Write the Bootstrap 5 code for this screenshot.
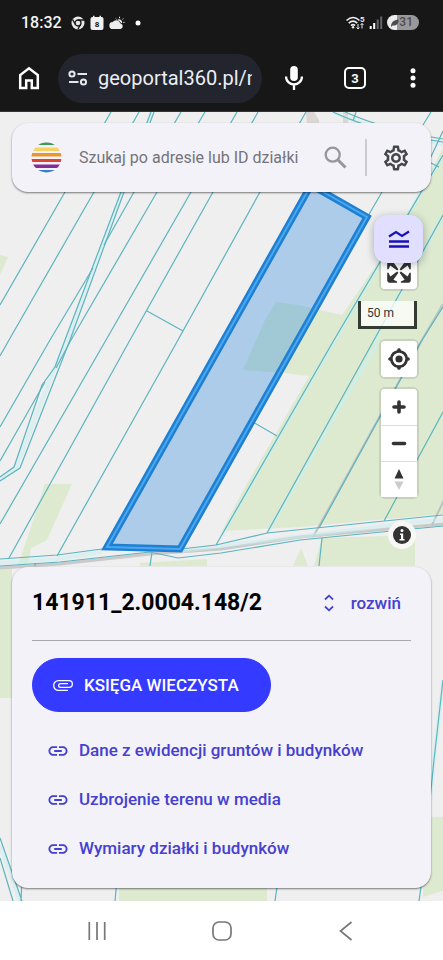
<!DOCTYPE html>
<html lang="pl">
<head>
<meta charset="utf-8">
<meta name="viewport" content="width=device-width, initial-scale=1">
<title>Geoportal 360</title>
<link href="https://cdn.jsdelivr.net/npm/bootstrap@5.3.0/dist/css/bootstrap.min.css" rel="stylesheet">
<style>
  body { font-family: Roboto, "Noto Sans", sans-serif; background: #fff; }
  svg { display: block; flex-shrink: 0; }
  button, .btn { line-height: 1; }
  .device-top { background: #171718; color: #f4f4f4; border-bottom: 1px solid #36343c; }
  .status-row { height: 45px; padding: 0 24px 0 21px; }
  .notices { gap: 5px; margin-left: 9px; }
  .clock { font-size: 16px; font-weight: 500; }
  .battery { width: 32px; height: 15px; border-radius: 8px; font-size: 12px; line-height: 15px; font-weight: 500; color: #4c4c50; background: linear-gradient(90deg, #ececec 31%, #98989b 31%); padding-right: 6px; }
  .browser-row { height: 66px; padding: 0 24px 0 18px; }
  .address { background: #22252d; border-radius: 25px; height: 49px; margin: 0 23px 0 18px; padding: 0 10px; min-width: 0; }
  .address input { background: none; border: 0; outline: 0; color: #eceef4; font-size: 20px; min-width: 0; width: 100%; padding: 0; margin-left: 10px; }
  .bare { background: none; border: 0; padding: 0; color: inherit; flex-shrink: 0; }
  .browser-tools { gap: 41px; }
  .tab-count { width: 22px; height: 22px; border: 2px solid #fff; border-radius: 5px; font-size: 13px; font-weight: 700; }
  .map-area { background: #efefef; isolation: isolate; overflow: hidden; }
  .map-canvas { z-index: -1; }
  .panel { background: #f3f2f8; border-radius: 16px; box-shadow: 0 1px 2px rgba(0,0,0,.5); margin: 0 12px; }
  .search-panel { height: 69px; margin-top: 11px; padding: 0 22px 0 19px; }
  .search-panel input { background: none; border: 0; outline: 0; font-size: 16px; min-width: 0; padding: 0; margin-left: 17px; color: #444; }
  .search-panel input::placeholder { color: #75747a; opacity: 1; }
  .divider { width: 2px; height: 37px; background: #cccbd1; margin: 0 16px 0 18px; }
  .controls { padding-right: 26px; margin-top: 23px; }
  .legend-btn { width: 49px; height: 48px; border-radius: 13px; background: #e0dfff; border: 0; margin-right: -6px; box-shadow: 0 2px 8px rgba(0,0,0,.3); z-index: 2; }
  .map-btn { width: 36px; height: 36px; border: 0; border-radius: 4px; background: #fff; padding: 0; color: #333; }
  .ctl-box { display: flex; flex-direction: column; background: #fff; border-radius: 4px; box-shadow: 0 0 0 2px rgba(0,0,0,.1); }
  .ctl-box .map-btn + .map-btn { border-top: 1px solid #ddd; border-radius: 0; }
  .fullscreen { margin-top: -10px; }
  .scale-bar { width: 59px; height: 28px; border: 3px solid #333b33; border-top: 0; background: rgba(255,255,255,.75); font-size: 12px; color: #333; line-height: 24px; padding-left: 6px; margin: 12px 0; }
  .zoom-box { margin-top: 12px; }
  .info-btn { width: 28px; height: 28px; border-radius: 50%; background: #f7f7f5; border: 0; padding: 0; margin: 24px 1px 16px; }
  .parcel { margin-bottom: 13px; padding: 20px 20px 15px; }
  .parcel h1 { font-size: 23px; line-height: 32px; font-weight: 700; color: #000; margin: 0; }
  .accent { color: #4540cf; font-weight: 500; }
  .expand { font-size: 17px; margin-right: 10px; gap: 12px; }
  .parcel hr { margin: 21px 0 17px; border-top: 1px solid #a9a8ae; opacity: 1; }
  .register { --bs-btn-bg: #343aff; --bs-btn-border-color: #343aff; --bs-btn-color: #fff; height: 54px; border-radius: 27px; font-size: 17px; font-weight: 500; padding: 0 31px 0 19px; gap: 10px; }
  .parcel-links { margin-top: 14px; }
  .parcel-links a { height: 49px; font-size: 17px; text-decoration: none; padding-left: 16px; gap: 11px; }
  .system-nav { height: 59px; background: #fff; color: #77777a; padding: 0 88px; }
</style>
</head>
<body>
<div class="d-flex flex-column min-vh-100">

  <header class="device-top">
    <div class="status-row d-flex align-items-center">
      <span class="clock">18:32</span>
      <span class="notices d-flex align-items-center">
        <svg width="14" height="14" viewBox="0 0 14 14"><circle cx="7" cy="7" r="6.500" fill="#e8e8e8"/><circle cx="7" cy="7" r="3" fill="#e8e8e8" stroke="#171718" stroke-width="1.300"/><path d="M7 4h6M4.400 8.500 1.600 3.600M9.600 8.500 6.800 13.300" stroke="#171718" stroke-width="1.300"/></svg>
        <svg width="14" height="16" viewBox="0 0 14 16"><path fill="#f1f1f1" d="M2.500 2H3V.8h1.500V2h5V.8H11V2h.5A2 2 0 0 1 13.500 4v9a2 2 0 0 1-2 2h-9a2 2 0 0 1-2-2V4a2 2 0 0 1 2-2z"/><text x="7" y="12" text-anchor="middle" font-size="8" font-weight="700" fill="#171718">8</text></svg>
        <svg width="16" height="14" viewBox="0 0 16 14"><path fill="#ededed" d="M4 13a3.500 3.500 0 0 1-.3-7A4.500 4.500 0 0 1 11.500 7.500 2.800 2.800 0 0 1 11.500 13z"/><path fill="#ededed" d="M8 4.300a3 3 0 0 1 5 3l-.8-.3A5 5 0 0 0 8 4.300z"/><path d="M10.500 2.200V.8M13.400 3.500l1-1M14.200 6.300h1.400M7.600 3.400l-.9-.9" stroke="#ededed"/></svg>
        <svg width="12" height="6" viewBox="0 0 12 6"><circle cx="8" cy="3" r="2.500" fill="#fff"/></svg>
      </span>
      <svg class="ms-auto" width="38" height="16" viewBox="0 0 38 16"><g fill="none" stroke="#ececec" stroke-width="1.600"><path d="M1.500 5.500q6.500-6 13 0M3.700 8.200q4.300-4 8.600 0M6 10.600q2-2 4 0"/></g><circle cx="8" cy="12.300" r="1.200" fill="#ececec"/><path d="M13 9v5M11.500 12.500 13 14l1.500-1.500M17 13.500V8.500M15.500 10 17 8.500l1.500 1.500" stroke="#ececec" fill="none"/><text x="15" y="7" font-size="8" font-weight="700" fill="#ececec">5</text><path d="M25.700 14v-3M29.200 14V8" stroke="#fff" stroke-width="2"/><path d="M32.700 14V4.500M36.200 14V1.500" stroke="#66666a" stroke-width="2"/></svg>
      <span class="battery ms-1 d-flex align-items-center justify-content-end"><svg width="8" height="8" viewBox="0 0 8 8"><path d="M0 8C0 3 3 1 7.500.5 8 5 5 7 1.500 6.500z" fill="#4c4c50"/></svg>31</span>
    </div>
    <div class="browser-row d-flex align-items-center">
      <button class="bare" aria-label="Strona główna"><svg width="22" height="24" viewBox="0 0 22 24"><path d="M2.200 22V9L11 2.300 19.800 9v13h-6v-7.500H8.200V22z" fill="none" stroke="#fff" stroke-width="2.500"/></svg></button>
      <div class="address d-flex align-items-center flex-grow-1">
        <svg width="20" height="16" viewBox="0 0 20 16"><g fill="none" stroke="#e4e6ec" stroke-width="2"><circle cx="4" cy="4" r="2.600"/><circle cx="15.500" cy="12" r="2.600"/><path d="M9.500 4H19M1 12h9.500"/></g></svg>
        <input type="text" aria-label="Adres strony" value="geoportal360.pl/mapa">
      </div>
      <div class="browser-tools d-flex align-items-center">
        <button class="bare" aria-label="Wyszukiwanie głosowe"><svg width="18" height="24" viewBox="0 0 18 24"><rect x="5.200" y="0" width="7.600" height="15" rx="3.800" fill="#fff"/><path d="M1 10.500a8 8 0 0 0 16 0M9 18.500V24" fill="none" stroke="#fff" stroke-width="2.300"/></svg></button>
        <button class="bare tab-count" aria-label="Karty">3</button>
        <button class="bare" aria-label="Menu"><svg width="12" height="20" viewBox="0 0 12 20" fill="#fff"><circle cx="6" cy="2.700" r="2.500"/><circle cx="6" cy="10" r="2.500"/><circle cx="6" cy="17.300" r="2.500"/></svg></button>
      </div>
    </div>
  </header>

  <main class="map-area position-relative flex-grow-1 d-flex flex-column">
    <svg class="map-canvas position-absolute top-0 start-0 w-100 h-100" viewBox="0 112 443 789" preserveAspectRatio="xMidYMid slice" aria-hidden="true">
      <g fill="#ddead0">
        <path d="M443 148 400 230 342 315 320 310 298 305 276 302 265 320 243 370 284 373 309 376 245 487 222 531 300 527 443 514z"/>
        <path d="M314 566l8-28 93-3v31zM301 548l7 18h-15zM45 484h27L47 540l-16 8-3 17-28 3v130h12V566h6zM0 255l8 2-8 18zM119 880h148v21H119zM443 817h-20v80l20-6zM140 563l67-4v7h-67z"/>
      </g>
      <path d="M306 112l8 0 5 8 0 6h-12zM343 112h5v12h-5z" fill="#dcd6d4"/>
      <path d="M0 568 60 564 150 554 221 549 300 537 443 524" fill="none" stroke="#cbcaca" stroke-width="3"/>
      <path d="M313 537 422 340 443 304M432 525l12-25" fill="none" stroke="#bcc2c3" stroke-width="2"/>
      <g fill="none" stroke="#c8f0f1" stroke-width="4" opacity=".5">
        <path d="M152 112 122 192 67 340 54 369 16 468 0 479M334 342 222 535M378 342 269 530M443 155 334 342M443 215 374 342M0 563 57 559 102 552M181 551l262-32M333 112q45 20 110 32M443 680 434 760 430 800M0 845 20 901"/>
      </g>
      <g fill="none" stroke="#5cb4bf" stroke-width="1.200">
        <path d="M111 112 65 192 0 305M139 112 94 192 9 340 0 356"/>
        <path d="M151 112 121 192 65 340 55 367 42 385 14 467 0 477M154 112 124 192 70 340 20 468 0 481"/>
        <path d="M181 112 134 192 104 245M93 268 50 340 0 427M45 382 0 461M205 112 157 192 71 340 56 368"/>
        <path d="M237 112 191 192 106 340 0 524M258 112 213 192 130 340 9 558M306 112 260 192 178 340 57 556M147 311l36 20"/>
        <path d="M0 559 57 555 102 549M0 566 60 562 150 552 178 558 221 553 300 540 443 526M152 552l-2 14M35 563v3"/>
        <path d="M181 549 216 545 267 533 443 515M216 545 334 340 380 262 443 155M267 533 374 340 443 215M422 340 319 528M443 412 384 521M443 307l-21 33M253 422l24 14M322 538l-3 28M382 192l-14 24"/>
        <path d="M333 112q42 20 110 30M345 112q40 18 98 27M431 112l-8 13M443 131l-14 30M431 163l8 4M356 112l-3 9"/>
        <path d="M443 680 434 760 430 800M0 838 22 901M0 858 13 901M22 880l-1 21M117 880l-2 21M278 880l-3 21M422 880l-3 21"/>
      </g>
      <path d="M311 185 367 217 180 549 107 547z" fill="#3d8fdf" fill-opacity=".37" stroke="#1e7fd3" stroke-width="7"/>
      <path d="M311 185 367 217 180 549 107 547z" fill="none" stroke="#4aa9ee" stroke-width="2"/>
    </svg>

    <form class="panel search-panel d-flex align-items-center">
      <svg width="31" height="31" viewBox="0 0 31 31"><clipPath id="disc"><circle cx="15.500" cy="15.500" r="15"/></clipPath><g clip-path="url(#disc)"><path d="M0 0h31v3H0z" fill="#3f9b4f"/><path d="M0 5.500h31v3.500H0z" fill="#f8d264"/><path d="M0 11h31v3.500H0z" fill="#e8962e"/><path d="M0 17h31v3H0z" fill="#dc4337"/><path d="M0 22.500h31V26H0z" fill="#882a99"/><path d="M0 28h31v3H0z" fill="#3a7fc4"/></g></svg>
      <input class="flex-grow-1" type="search" aria-label="Szukaj" placeholder="Szukaj po adresie lub ID działki">
      <button type="button" class="bare" aria-label="Szukaj"><svg width="23" height="23" viewBox="0 0 23 23" fill="none" stroke="#98959b"><circle cx="8.700" cy="8.700" r="7" stroke-width="2.300"/><path d="M14 14l7.500 7.500" stroke-width="3"/></svg></button>
      <span class="divider"></span>
      <button type="button" class="bare" aria-label="Ustawienia"><svg width="26" height="26" viewBox="1.500 1.500 21 21" fill="#45454c"><path d="M19.430 12.980c.04-.32.07-.64.07-.98s-.03-.66-.07-.98l2.110-1.650c.19-.15.24-.42.12-.64l-2-3.460c-.09-.16-.26-.25-.44-.25-.06 0-.12.010-.17.030l-2.490 1c-.52-.4-1.080-.73-1.690-.98l-.38-2.650C14.460 2.180 14.250 2 14 2h-4c-.25 0-.46.18-.49.42l-.38 2.650c-.61.25-1.170.59-1.690.98l-2.490-1c-.06-.02-.12-.03-.18-.03-.17 0-.34.09-.43.25l-2 3.460c-.13.22-.07.49.12.64l2.110 1.650c-.04.32-.07.65-.07.98s.03.66.07.98l-2.110 1.650c-.19.15-.24.42-.12.64l2 3.460c.09.16.26.25.44.25.06 0 .12-.01.17-.03l2.490-1c.52.4 1.080.73 1.690.98l.38 2.650c.03.24.24.42.49.42h4c.25 0 .46-.18.49-.42l.38-2.650c.61-.25 1.170-.59 1.690-.98l2.490 1c.06.02.12.03.18.03.17 0 .34-.09.43-.25l2-3.460c.12-.22.07-.49-.12-.64l-2.110-1.650zm-1.980-1.710c.04.31.05.52.05.73s-.02.43-.05.73l-.14 1.130.89.7 1.080.84-.7 1.210-1.270-.51-1.040-.42-.9.68c-.43.32-.84.56-1.250.73l-1.060.43-.16 1.130-.2 1.350h-1.400l-.19-1.350-.16-1.130-1.060-.43c-.43-.18-.83-.41-1.230-.71l-.91-.7-1.060.43-1.270.51-.7-1.210 1.080-.84.89-.7-.14-1.130c-.03-.31-.05-.54-.05-.74s.02-.43.05-.73l.14-1.130-.89-.7-1.080-.84.7-1.210 1.270.51 1.040.42.9-.68c.43-.32.84-.56 1.250-.73l1.060-.43.16-1.130.2-1.350h1.390l.19 1.350.16 1.130 1.060.43c.43.18.83.41 1.230.71l.91.7 1.060-.43 1.270-.51.7 1.210-1.070.85-.89.7.14 1.130zM12 8c-2.210 0-4 1.790-4 4s1.790 4 4 4 4-1.790 4-4-1.790-4-4-4zm0 6c-1.100 0-2-.9-2-2s.9-2 2-2 2 .9 2 2-.9 2-2 2z"/></svg></button>
    </form>

    <div class="controls d-flex flex-column align-items-end">
      <button class="legend-btn position-relative d-flex align-items-center justify-content-center p-0" aria-label="Legenda"><svg width="22" height="18" viewBox="0 0 22 18" fill="none" stroke="#1a0fb8"><path d="M1 6.500 8 2l6 4 7-4.500" stroke-width="2.200"/><path d="M1 11.500h20M1 16.500h20" stroke-width="2.300"/></svg></button>
      <div class="ctl-box fullscreen"><button class="map-btn" aria-label="Pełny ekran"><svg width="36" height="36" viewBox="0 0 29 29" fill="#333"><path d="M24 16v5.500c0 1.750-.75 2.500-2.500 2.500H16v-1l3-1.500-4-5.500 1-1 5.500 4 1.500-3h1zM6 16l1.500 3 5.500-4 1 1-4 5.500 3 1.500v1H7.500C5.750 24 5 23.250 5 21.500V16h1zm7-11v1l-3 1.500 4 5.500-1 1-5.500-4L6 13H5V7.500C5 5.750 5.750 5 7.500 5H13zm11 2.500c0-1.750-.75-2.500-2.500-2.500H16v1l3 1.500-4 5.500 1 1 5.500-4 1.500 3h1V7.500z"/></svg></button></div>
      <div class="scale-bar">50 m</div>
      <div class="ctl-box"><button class="map-btn" aria-label="Moja lokalizacja"><svg width="36" height="36" viewBox="0 0 20 20" fill="#333"><path d="M10 4C9 4 9 5 9 5v.1A5 5 0 0 0 5.100 9H5s-1 0-1 1 1 1 1 1h.1A5 5 0 0 0 9 14.900v.1s0 1 1 1 1-1 1-1v-.1a5 5 0 0 0 3.900-3.900h.1s1 0 1-1-1-1-1-1h-.1A5 5 0 0 0 11 5.100V5s0-1-1-1zm0 2.500a3.500 3.500 0 1 1 0 7 3.500 3.500 0 1 1 0-7z"/><circle cx="10" cy="10" r="2"/></svg></button></div>
      <div class="ctl-box zoom-box">
        <button class="map-btn" aria-label="Przybliż"><svg width="36" height="36" viewBox="0 0 36 36"><path d="M18 13v10M13 18h10" stroke="#333" stroke-width="3.600" stroke-linecap="round"/></svg></button>
        <button class="map-btn" aria-label="Oddal"><svg width="36" height="36" viewBox="0 0 36 36"><path d="M12.500 17.500h11" stroke="#333" stroke-width="3.600" stroke-linecap="round"/></svg></button>
        <button class="map-btn" aria-label="Północ"><svg width="36" height="36" viewBox="0 0 36 36"><path d="M13.500 16.500 18 7l4.500 9.500z" fill="#333"/><path d="M13.500 19.500h9L18 28z" fill="#ccc"/></svg></button>
      </div>
      <button class="info-btn d-flex align-items-center justify-content-center" aria-label="Informacje"><svg width="18" height="18" viewBox="0 0 18 18"><circle cx="9" cy="9" r="9" fill="#333"/><circle cx="9" cy="4.500" r="1.500" fill="#fff"/><path d="M7 7.500h3.200V13H11.500v1.500h-5V13H8V9H7z" fill="#fff"/></svg></button>
    </div>

    <section class="panel parcel mt-auto">
      <div class="d-flex align-items-center justify-content-between">
        <h1>141911_2.0004.148/2</h1>
        <button class="bare accent expand d-flex align-items-center"><svg width="20" height="18" viewBox="0 0 20 18" fill="none" stroke="#4540cf" stroke-width="1.800"><path d="M6 5.500 10 1.700l4 3.800M6 12.500l4 3.800 4-3.800"/></svg>rozwiń</button>
      </div>
      <hr>
      <button class="btn register d-inline-flex align-items-center"><svg width="22" height="22" viewBox="1 1 22 22" fill="#fff"><path fill-rule="evenodd" d="M7.500 7H18a4 4 0 0 1 0 8H9.500a2.500 2.500 0 0 1 0-5H17v1.300H9.500a1.200 1.200 0 0 0 0 2.400H18a2.700 2.700 0 0 0 0-5.400H7.500a4.200 4.200 0 0 0 0 8.400H17V18H7.500a5.500 5.500 0 0 1 0-11z"/></svg>KSIĘGA WIECZYSTA</button>
      <nav class="parcel-links d-flex flex-column">
        <a class="accent d-flex align-items-center" href="#"><svg width="20" height="20" viewBox="1.500 2 21 20" fill="#4540cf"><path d="M3.900 12c0-1.710 1.390-3.100 3.100-3.100h4V7H7c-2.760 0-5 2.240-5 5s2.240 5 5 5h4v-1.900H7c-1.710 0-3.100-1.390-3.100-3.100zM8 13h8v-2H8v2zm9-6h-4v1.900h4c1.710 0 3.100 1.390 3.100 3.100s-1.390 3.100-3.100 3.100h-4V17h4c2.760 0 5-2.240 5-5s-2.240-5-5-5z"/></svg>Dane z ewidencji gruntów i budynków</a>
        <a class="accent d-flex align-items-center" href="#"><svg width="20" height="20" viewBox="1.500 2 21 20" fill="#4540cf"><path d="M3.900 12c0-1.710 1.390-3.100 3.100-3.100h4V7H7c-2.760 0-5 2.240-5 5s2.240 5 5 5h4v-1.900H7c-1.710 0-3.100-1.390-3.100-3.100zM8 13h8v-2H8v2zm9-6h-4v1.900h4c1.710 0 3.100 1.390 3.100 3.100s-1.390 3.100-3.100 3.100h-4V17h4c2.760 0 5-2.240 5-5s-2.240-5-5-5z"/></svg>Uzbrojenie terenu w media</a>
        <a class="accent d-flex align-items-center" href="#"><svg width="20" height="20" viewBox="1.500 2 21 20" fill="#4540cf"><path d="M3.900 12c0-1.710 1.390-3.100 3.100-3.100h4V7H7c-2.760 0-5 2.240-5 5s2.240 5 5 5h4v-1.900H7c-1.710 0-3.100-1.390-3.100-3.100zM8 13h8v-2H8v2zm9-6h-4v1.900h4c1.710 0 3.100 1.390 3.100 3.100s-1.390 3.100-3.100 3.100h-4V17h4c2.760 0 5-2.240 5-5s-2.240-5-5-5z"/></svg>Wymiary działki i budynków</a>
      </nav>
    </section>
  </main>

  <footer class="system-nav d-flex align-items-center justify-content-between">
    <button class="bare" aria-label="Ostatnie"><svg width="18" height="20" viewBox="0 0 18 20"><path d="M1.300 1v18M9 1v18M16.700 1v18" stroke="#77777a" stroke-width="1.700"/></svg></button>
    <button class="bare" aria-label="Ekran główny"><svg width="20" height="20" viewBox="0 0 20 20"><rect x="1" y="1" width="18" height="18" rx="6" fill="none" stroke="#77777a" stroke-width="1.700"/></svg></button>
    <button class="bare" aria-label="Wstecz"><svg width="18" height="20" viewBox="0 0 18 20"><path d="M14.500 1 3.500 10l11 9" fill="none" stroke="#77777a" stroke-width="1.700"/></svg></button>
  </footer>
</div>
<script src="https://cdn.jsdelivr.net/npm/bootstrap@5.3.0/dist/js/bootstrap.bundle.min.js"></script>
</body>
</html>
